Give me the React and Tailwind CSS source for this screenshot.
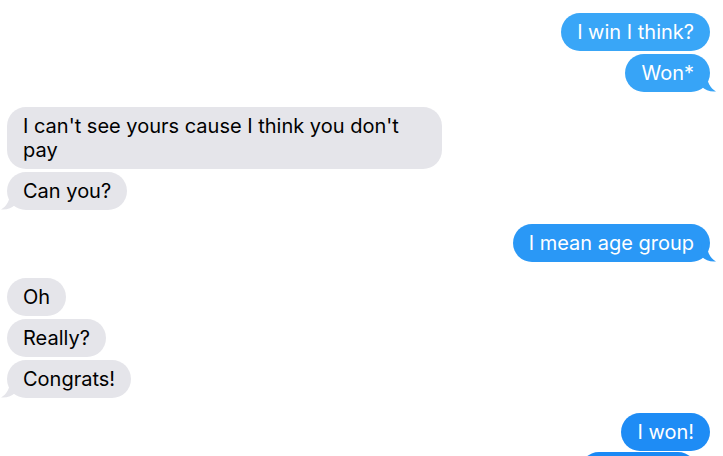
const messages = [
  { text: "I win I think?", me: true, mt: "mt-[13px]", tail: false, color: "bg-[#39a6f7]" },
  { text: "Won*", me: true, mt: "mt-[3px]", tail: true, color: "bg-[#37a4f7]" },
  { text: "I can't see yours cause I think you don't pay", me: false, mt: "mt-[15px]", tail: false, w: "leading-[24.5px]" },
  { text: "Can you?", me: false, mt: "mt-[3px]", tail: true },
  { text: "I mean age group", me: true, mt: "mt-[14px]", tail: true, color: "bg-[#2a98f6]" },
  { text: "Oh", me: false, mt: "mt-[16px]", tail: false },
  { text: "Really?", me: false, mt: "mt-[3px]", tail: false },
  { text: "Congrats!", me: false, mt: "mt-[3px]", tail: true },
  { text: "I won!", me: true, mt: "mt-[15px]", tail: false, color: "bg-[#1e8cf5]" },
  { text: "", me: true, mt: "mt-[1px]", tail: false, color: "bg-[#1b89f5]", w: "w-[117px] h-[38px] mr-[13px]" },
];

function Tail({ me, fill }) {
  if (me) {
    return (
      <svg className="absolute -right-[7px] bottom-0" width="16" height="18" viewBox="0 0 16 18">
        <path d="M0 0 L6 0 C6 8 9 14 15 17.5 C9 18 4 16 1 13 Z" fill={fill} />
      </svg>
    );
  }
  return (
    <svg className="absolute -left-[7px] bottom-0" width="16" height="18" viewBox="0 0 16 18">
      <path d="M16 0 L10 0 C10 8 7 14 1 17.5 C7 18 12 16 15 13 Z" fill={fill} />
    </svg>
  );
}

const tailFill = {
  "bg-[#37a4f7]": "#37a4f7",
  "bg-[#2a98f6]": "#2a98f6",
};

export default function App() {
  return (
    <div className="w-[723px] h-[456px] overflow-hidden bg-white" style={{ fontFamily: "Inter, 'Liberation Sans', sans-serif" }}>
      <div className="flex flex-col">
        {messages.map((m, i) => (
          <div key={i} className={`flex ${m.me ? "justify-end pr-[13px]" : "justify-start pl-[7px]"} ${m.mt}`}>
            <div
              className={`relative rounded-[19px] px-4 py-[7px] text-[20px] leading-[24px] max-w-[435px] ${
                m.me ? `${m.color} text-white` : "bg-[#e5e5ea] text-black"
              } ${m.w || ""}`}
            >
              {m.text}
              {m.tail && <Tail me={m.me} fill={m.me ? tailFill[m.color] : "#e5e5ea"} />}
            </div>
          </div>
        ))}
      </div>
    </div>
  );
}
